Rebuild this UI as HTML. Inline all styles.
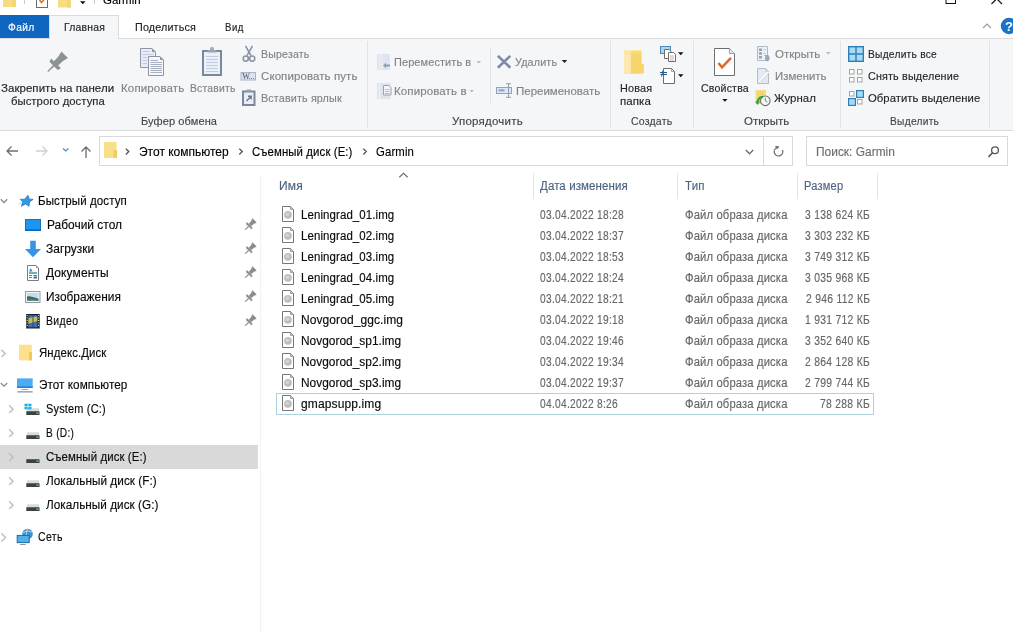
<!DOCTYPE html>
<html><head><meta charset="utf-8"><style>
html,body{margin:0;padding:0;width:1013px;height:633px;overflow:hidden;background:#fff;position:relative}
.t{position:absolute;white-space:nowrap;font-family:"Liberation Sans",sans-serif;font-size:12px;line-height:12px;transform-origin:0 0;-webkit-text-stroke:0.15px currentColor}
svg{overflow:visible}
#root{position:absolute;left:0;top:0;width:1013px;height:633px;will-change:transform}
</style></head><body><div id="root">
<div style="position:absolute;left:0px;top:38px;width:1013px;height:92px;background:#f5f6f7"></div>
<div style="position:absolute;left:0px;top:38px;width:1013px;height:1px;background:#dadbdc"></div>
<div style="position:absolute;left:0px;top:130px;width:1013px;height:1px;background:#dadbdc"></div>
<div style="position:absolute;left:0px;top:15px;width:49px;height:23px;background:#0f66c0"></div>
<div style="position:absolute;left:49px;top:15px;width:70px;height:24px;background:#f5f6f7;border:1px solid #dadbdc;border-bottom:none;box-sizing:border-box"></div>
<div class="t" style="left:7.70px;top:21.02px;color:#fff;font-size:11.5px;letter-spacing:0.365px;transform:scaleX(0.8922);">Файл</div>
<div class="t" style="left:63.70px;top:21.02px;color:#222;font-size:11.5px;letter-spacing:0.242px;transform:scaleX(0.9067);">Главная</div>
<div class="t" style="left:134.80px;top:21.02px;color:#222;font-size:11.5px;letter-spacing:0.155px;transform:scaleX(0.9369);">Поделиться</div>
<div class="t" style="left:225.40px;top:21.02px;color:#222;font-size:11.5px;letter-spacing:0.659px;transform:scaleX(0.8317);">Вид</div>
<div class="t" style="left:102.70px;top:-6.38px;color:#000;font-size:11.5px;letter-spacing:0.010px;transform:scaleX(0.9960);">Garmin</div>
<div style="position:absolute;left:24px;top:0px;width:1px;height:4px;background:#c8c8c8"></div>
<div style="position:absolute;left:94px;top:0px;width:1px;height:4px;background:#c8c8c8"></div>
<div class="t" style="left:1.40px;top:82.02px;color:#262626;font-size:11.5px;letter-spacing:0.042px;transform:scaleX(0.9999);">Закрепить на панели</div>
<div class="t" style="left:10.70px;top:95.02px;color:#262626;font-size:11.5px;letter-spacing:0.035px;transform:scaleX(0.9838);">быстрого доступа</div>
<div class="t" style="left:120.70px;top:82.02px;color:#838383;font-size:11.5px;letter-spacing:0.142px;transform:scaleX(0.9999);">Копировать</div>
<div class="t" style="left:189.60px;top:82.02px;color:#838383;font-size:11.5px;letter-spacing:0.252px;transform:scaleX(0.8987);">Вставить</div>
<div class="t" style="left:260.60px;top:48.02px;color:#838383;font-size:11.5px;letter-spacing:0.212px;transform:scaleX(0.9177);">Вырезать</div>
<div class="t" style="left:260.60px;top:70.02px;color:#838383;font-size:11.5px;letter-spacing:0.086px;transform:scaleX(0.9999);">Скопировать путь</div>
<div class="t" style="left:260.60px;top:92.02px;color:#838383;font-size:11.5px;letter-spacing:0.140px;transform:scaleX(0.9377);">Вставить ярлык</div>
<div class="t" style="left:141.30px;top:115.02px;color:#454545;font-size:11.5px;letter-spacing:0.100px;transform:scaleX(0.9590);">Буфер обмена</div>
<div class="t" style="left:394.40px;top:56.02px;color:#838383;font-size:11.5px;letter-spacing:0.109px;transform:scaleX(0.9522);">Переместить в</div>
<div class="t" style="left:394.40px;top:85.02px;color:#838383;font-size:11.5px;letter-spacing:0.116px;transform:scaleX(0.9999);">Копировать в</div>
<div class="t" style="left:514.80px;top:56.02px;color:#838383;font-size:11.5px;letter-spacing:0.164px;transform:scaleX(0.9357);">Удалить</div>
<div class="t" style="left:515.60px;top:85.02px;color:#838383;font-size:11.5px;transform:scaleX(0.9981);">Переименовать</div>
<div class="t" style="left:452.00px;top:115.02px;color:#454545;font-size:11.5px;letter-spacing:0.227px;transform:scaleX(0.9999);">Упорядочить</div>
<div class="t" style="left:619.60px;top:82.02px;color:#262626;font-size:11.5px;letter-spacing:0.168px;transform:scaleX(0.9419);">Новая</div>
<div class="t" style="left:619.60px;top:95.02px;color:#262626;font-size:11.5px;letter-spacing:0.092px;transform:scaleX(0.9999);">папка</div>
<div class="t" style="left:630.60px;top:115.02px;color:#454545;font-size:11.5px;letter-spacing:0.218px;transform:scaleX(0.9154);">Создать</div>
<div class="t" style="left:701.00px;top:82.02px;color:#262626;font-size:11.5px;letter-spacing:0.209px;transform:scaleX(0.9179);">Свойства</div>
<div class="t" style="left:774.50px;top:48.02px;color:#838383;font-size:11.5px;letter-spacing:0.022px;transform:scaleX(0.9999);">Открыть</div>
<div class="t" style="left:774.50px;top:70.02px;color:#838383;font-size:11.5px;letter-spacing:0.027px;transform:scaleX(0.9892);">Изменить</div>
<div class="t" style="left:774.00px;top:92.02px;color:#262626;font-size:11.5px;letter-spacing:0.017px;transform:scaleX(0.9941);">Журнал</div>
<div class="t" style="left:743.70px;top:115.02px;color:#454545;font-size:11.5px;letter-spacing:0.022px;transform:scaleX(0.9999);">Открыть</div>
<div class="t" style="left:867.60px;top:48.02px;color:#262626;font-size:11.5px;letter-spacing:0.269px;transform:scaleX(0.8897);">Выделить все</div>
<div class="t" style="left:867.60px;top:70.02px;color:#262626;font-size:11.5px;letter-spacing:0.140px;transform:scaleX(0.9402);">Снять выделение</div>
<div class="t" style="left:867.60px;top:92.02px;color:#262626;font-size:11.5px;letter-spacing:0.041px;transform:scaleX(0.9817);">Обратить выделение</div>
<div class="t" style="left:889.80px;top:115.02px;color:#454545;font-size:11.5px;letter-spacing:0.315px;transform:scaleX(0.8849);">Выделить</div>
<div style="position:absolute;left:367px;top:41px;width:1px;height:87px;background:#e2e3e4"></div>
<div style="position:absolute;left:610px;top:41px;width:1px;height:87px;background:#e2e3e4"></div>
<div style="position:absolute;left:693px;top:41px;width:1px;height:87px;background:#e2e3e4"></div>
<div style="position:absolute;left:840px;top:41px;width:1px;height:87px;background:#e2e3e4"></div>
<div style="position:absolute;left:989px;top:41px;width:1px;height:87px;background:#e2e3e4"></div>
<div style="position:absolute;left:490px;top:48px;width:1px;height:55px;background:#e2e3e4"></div>
<div style="position:absolute;left:99px;top:136px;width:694px;height:30px;border:1px solid #d9d9d9;box-sizing:border-box;background:#fff"></div>
<div style="position:absolute;left:763px;top:137px;width:1px;height:28px;background:#d9d9d9"></div>
<div style="position:absolute;left:806px;top:136px;width:202px;height:30px;border:1px solid #d9d9d9;box-sizing:border-box;background:#fff"></div>
<div class="t" style="left:138.90px;top:145.84px;color:#000;font-size:12.0px;transform:scaleX(0.9995);">Этот компьютер</div>
<div class="t" style="left:252.30px;top:145.84px;color:#000;font-size:12.0px;letter-spacing:0.116px;transform:scaleX(0.9485);">Съемный диск (E:)</div>
<div class="t" style="left:376.40px;top:145.84px;color:#000;font-size:12.0px;letter-spacing:0.148px;transform:scaleX(0.9456);">Garmin</div>
<div class="t" style="left:815.50px;top:145.84px;color:#6d6d6d;font-size:12.0px;letter-spacing:0.015px;transform:scaleX(0.9932);">Поиск: Garmin</div>
<div class="t" style="left:279.20px;top:179.84px;color:#4e6380;font-size:12.0px;letter-spacing:0.215px;transform:scaleX(0.9999);">Имя</div>
<div class="t" style="left:540.00px;top:179.84px;color:#4e6380;font-size:12.0px;letter-spacing:0.097px;transform:scaleX(0.9592);">Дата изменения</div>
<div class="t" style="left:684.60px;top:179.84px;color:#4e6380;font-size:12.0px;letter-spacing:0.153px;transform:scaleX(0.9553);">Тип</div>
<div class="t" style="left:804.30px;top:179.84px;color:#4e6380;font-size:12.0px;letter-spacing:0.223px;transform:scaleX(0.9232);">Размер</div>
<div style="position:absolute;left:533px;top:173px;width:1px;height:26px;background:#e5e5e5"></div>
<div style="position:absolute;left:677px;top:173px;width:1px;height:26px;background:#e5e5e5"></div>
<div style="position:absolute;left:797px;top:173px;width:1px;height:26px;background:#e5e5e5"></div>
<div style="position:absolute;left:877px;top:173px;width:1px;height:26px;background:#e5e5e5"></div>
<div style="position:absolute;left:260px;top:176px;width:1px;height:457px;background:#f2f2f2"></div>
<div style="position:absolute;left:0px;top:445px;width:258px;height:24px;background:#d9d9d9"></div>
<div class="t" style="left:38.40px;top:194.84px;color:#0a0a0a;font-size:12.0px;letter-spacing:0.092px;transform:scaleX(0.9617);">Быстрый доступ</div>
<div class="t" style="left:46.60px;top:218.84px;color:#0a0a0a;font-size:12.0px;letter-spacing:0.015px;transform:scaleX(0.9934);">Рабочий стол</div>
<div class="t" style="left:46.10px;top:242.84px;color:#0a0a0a;font-size:12.0px;letter-spacing:0.006px;transform:scaleX(0.9972);">Загрузки</div>
<div class="t" style="left:46.10px;top:266.84px;color:#0a0a0a;font-size:12.0px;letter-spacing:0.093px;transform:scaleX(0.9999);">Документы</div>
<div class="t" style="left:46.40px;top:290.84px;color:#0a0a0a;font-size:12.0px;letter-spacing:0.026px;transform:scaleX(0.9897);">Изображения</div>
<div class="t" style="left:46.40px;top:314.84px;color:#0a0a0a;font-size:12.0px;letter-spacing:0.410px;transform:scaleX(0.8720);">Видео</div>
<div class="t" style="left:38.50px;top:346.84px;color:#0a0a0a;font-size:12.0px;letter-spacing:0.125px;transform:scaleX(0.9483);">Яндекс.Диск</div>
<div class="t" style="left:38.50px;top:378.84px;color:#0a0a0a;font-size:12.0px;letter-spacing:0.056px;transform:scaleX(0.9762);">Этот компьютер</div>
<div class="t" style="left:46.20px;top:402.84px;color:#0a0a0a;font-size:12.0px;letter-spacing:0.195px;transform:scaleX(0.9130);">System (C:)</div>
<div class="t" style="left:46.20px;top:426.84px;color:#0a0a0a;font-size:12.0px;letter-spacing:0.362px;transform:scaleX(0.8449);">B (D:)</div>
<div class="t" style="left:46.20px;top:450.84px;color:#0a0a0a;font-size:12.0px;letter-spacing:0.112px;transform:scaleX(0.9499);">Съемный диск (E:)</div>
<div class="t" style="left:46.20px;top:474.84px;color:#0a0a0a;font-size:12.0px;letter-spacing:0.043px;transform:scaleX(0.9796);">Локальный диск (F:)</div>
<div class="t" style="left:46.20px;top:498.84px;color:#0a0a0a;font-size:12.0px;letter-spacing:0.051px;transform:scaleX(0.9761);">Локальный диск (G:)</div>
<div class="t" style="left:38.40px;top:530.84px;color:#0a0a0a;font-size:12.0px;letter-spacing:0.408px;transform:scaleX(0.8741);">Сеть</div>
<div style="position:absolute;left:276px;top:393px;width:598px;height:22px;border:1px solid #b0d2df;box-sizing:border-box"></div>
<div class="t" style="left:300.50px;top:208.84px;color:#0a0a0a;font-size:12.0px;letter-spacing:0.098px;transform:scaleX(0.9555);">Leningrad_01.img</div>
<div class="t" style="left:540.30px;top:208.84px;color:#666666;font-size:12.0px;letter-spacing:0.352px;transform:scaleX(0.8481);">03.04.2022 18:28</div>
<div class="t" style="left:685.00px;top:208.84px;color:#666666;font-size:12.0px;letter-spacing:0.149px;transform:scaleX(0.9361);">Файл образа диска</div>
<div class="t" style="left:805.12px;top:208.84px;color:#666666;font-size:12.0px;letter-spacing:0.333px;transform:scaleX(0.8609);">3 138 624 КБ</div>
<div class="t" style="left:300.50px;top:229.84px;color:#0a0a0a;font-size:12.0px;letter-spacing:0.098px;transform:scaleX(0.9555);">Leningrad_02.img</div>
<div class="t" style="left:540.30px;top:229.84px;color:#666666;font-size:12.0px;letter-spacing:0.352px;transform:scaleX(0.8481);">03.04.2022 18:37</div>
<div class="t" style="left:685.00px;top:229.84px;color:#666666;font-size:12.0px;letter-spacing:0.149px;transform:scaleX(0.9361);">Файл образа диска</div>
<div class="t" style="left:805.12px;top:229.84px;color:#666666;font-size:12.0px;letter-spacing:0.333px;transform:scaleX(0.8609);">3 303 232 КБ</div>
<div class="t" style="left:300.50px;top:250.84px;color:#0a0a0a;font-size:12.0px;letter-spacing:0.098px;transform:scaleX(0.9555);">Leningrad_03.img</div>
<div class="t" style="left:540.30px;top:250.84px;color:#666666;font-size:12.0px;letter-spacing:0.352px;transform:scaleX(0.8481);">03.04.2022 18:53</div>
<div class="t" style="left:685.00px;top:250.84px;color:#666666;font-size:12.0px;letter-spacing:0.149px;transform:scaleX(0.9361);">Файл образа диска</div>
<div class="t" style="left:805.12px;top:250.84px;color:#666666;font-size:12.0px;letter-spacing:0.333px;transform:scaleX(0.8609);">3 749 312 КБ</div>
<div class="t" style="left:300.50px;top:271.84px;color:#0a0a0a;font-size:12.0px;letter-spacing:0.098px;transform:scaleX(0.9555);">Leningrad_04.img</div>
<div class="t" style="left:540.30px;top:271.84px;color:#666666;font-size:12.0px;letter-spacing:0.352px;transform:scaleX(0.8481);">03.04.2022 18:24</div>
<div class="t" style="left:685.00px;top:271.84px;color:#666666;font-size:12.0px;letter-spacing:0.149px;transform:scaleX(0.9361);">Файл образа диска</div>
<div class="t" style="left:805.12px;top:271.84px;color:#666666;font-size:12.0px;letter-spacing:0.333px;transform:scaleX(0.8609);">3 035 968 КБ</div>
<div class="t" style="left:300.50px;top:292.84px;color:#0a0a0a;font-size:12.0px;letter-spacing:0.098px;transform:scaleX(0.9555);">Leningrad_05.img</div>
<div class="t" style="left:540.30px;top:292.84px;color:#666666;font-size:12.0px;letter-spacing:0.352px;transform:scaleX(0.8481);">03.04.2022 18:21</div>
<div class="t" style="left:685.00px;top:292.84px;color:#666666;font-size:12.0px;letter-spacing:0.149px;transform:scaleX(0.9361);">Файл образа диска</div>
<div class="t" style="left:805.93px;top:292.84px;color:#666666;font-size:12.0px;letter-spacing:0.329px;transform:scaleX(0.8609);">2 946 112 КБ</div>
<div class="t" style="left:300.50px;top:313.84px;color:#0a0a0a;font-size:12.0px;letter-spacing:0.079px;transform:scaleX(0.9999);">Novgorod_ggc.img</div>
<div class="t" style="left:540.30px;top:313.84px;color:#666666;font-size:12.0px;letter-spacing:0.352px;transform:scaleX(0.8481);">03.04.2022 19:18</div>
<div class="t" style="left:685.00px;top:313.84px;color:#666666;font-size:12.0px;letter-spacing:0.149px;transform:scaleX(0.9361);">Файл образа диска</div>
<div class="t" style="left:805.12px;top:313.84px;color:#666666;font-size:12.0px;letter-spacing:0.333px;transform:scaleX(0.8609);">1 931 712 КБ</div>
<div class="t" style="left:300.50px;top:334.84px;color:#0a0a0a;font-size:12.0px;letter-spacing:0.021px;transform:scaleX(0.9908);">Novgorod_sp1.img</div>
<div class="t" style="left:540.30px;top:334.84px;color:#666666;font-size:12.0px;letter-spacing:0.352px;transform:scaleX(0.8481);">03.04.2022 19:46</div>
<div class="t" style="left:685.00px;top:334.84px;color:#666666;font-size:12.0px;letter-spacing:0.149px;transform:scaleX(0.9361);">Файл образа диска</div>
<div class="t" style="left:805.12px;top:334.84px;color:#666666;font-size:12.0px;letter-spacing:0.333px;transform:scaleX(0.8609);">3 352 640 КБ</div>
<div class="t" style="left:300.50px;top:355.84px;color:#0a0a0a;font-size:12.0px;letter-spacing:0.021px;transform:scaleX(0.9908);">Novgorod_sp2.img</div>
<div class="t" style="left:540.30px;top:355.84px;color:#666666;font-size:12.0px;letter-spacing:0.352px;transform:scaleX(0.8481);">03.04.2022 19:34</div>
<div class="t" style="left:685.00px;top:355.84px;color:#666666;font-size:12.0px;letter-spacing:0.149px;transform:scaleX(0.9361);">Файл образа диска</div>
<div class="t" style="left:805.12px;top:355.84px;color:#666666;font-size:12.0px;letter-spacing:0.333px;transform:scaleX(0.8609);">2 864 128 КБ</div>
<div class="t" style="left:300.50px;top:376.84px;color:#0a0a0a;font-size:12.0px;letter-spacing:0.021px;transform:scaleX(0.9908);">Novgorod_sp3.img</div>
<div class="t" style="left:540.30px;top:376.84px;color:#666666;font-size:12.0px;letter-spacing:0.352px;transform:scaleX(0.8481);">03.04.2022 19:37</div>
<div class="t" style="left:685.00px;top:376.84px;color:#666666;font-size:12.0px;letter-spacing:0.149px;transform:scaleX(0.9361);">Файл образа диска</div>
<div class="t" style="left:805.12px;top:376.84px;color:#666666;font-size:12.0px;letter-spacing:0.333px;transform:scaleX(0.8609);">2 799 744 КБ</div>
<div class="t" style="left:300.50px;top:397.84px;color:#0a0a0a;font-size:12.0px;letter-spacing:0.126px;transform:scaleX(0.9999);">gmapsupp.img</div>
<div class="t" style="left:540.30px;top:397.84px;color:#666666;font-size:12.0px;letter-spacing:0.350px;transform:scaleX(0.8481);">04.04.2022 8:26</div>
<div class="t" style="left:685.00px;top:397.84px;color:#666666;font-size:12.0px;letter-spacing:0.149px;transform:scaleX(0.9361);">Файл образа диска</div>
<div class="t" style="left:820.22px;top:397.84px;color:#666666;font-size:12.0px;letter-spacing:0.351px;transform:scaleX(0.8609);">78 288 КБ</div>
<svg style="position:absolute;left:0;top:0" width="1013" height="633" viewBox="0 0 1013 633">
<!-- title bar icons -->
<rect x="3" y="-2" width="13" height="9" fill="#f8dc84"/><rect x="12" y="-2" width="4" height="9" fill="#f2d678"/>
<rect x="36.5" y="-2" width="11" height="9.5" fill="#fff" stroke="#6b6b6b" stroke-width="1"/>
<path d="M39.5 0 L41.5 2.5 L45 -1.5" stroke="#d8703a" stroke-width="1.6" fill="none"/>
<rect x="58" y="-2" width="13" height="9.5" fill="#f8dc84"/><rect x="67" y="-2" width="4" height="9.5" fill="#f2d678"/>
<path d="M80 1.3 L85.5 1.3 L82.75 4.2 Z" fill="#111"/>
<!-- window buttons -->
<rect x="946" y="-4" width="9.5" height="7.5" fill="none" stroke="#111" stroke-width="1"/>
<path d="M991.5 4 L1002.5 -7 M1002 4 L991 -7" stroke="#111" stroke-width="1.1" fill="none"/>
<!-- collapse chevron and help -->
<path d="M983 28 L987 24 L991 28" stroke="#9a9a9a" stroke-width="1.1" fill="none"/>
<circle cx="1009" cy="26" r="8.2" fill="#1a73c9"/>
<text x="1009" y="31" font-family="Liberation Sans" font-weight="bold" font-size="13" fill="#fff" text-anchor="middle">?</text>

<!-- pin big -->
<g transform="translate(54.8,64.6) rotate(45)" fill="#8c9397">
 <path d="M-7 -1.8 L7 -1.8 L5.8 1.8 L-5.8 1.8 Z"/>
 <path d="M-3 -1 L-3.2 -8 L-4.6 -14 L4.6 -14 L3.2 -8 L3 -1 Z"/>
 <path d="M-0.9 1.5 L0.9 1.5 L0.6 10 L-0.6 10 Z"/>
</g>
<!-- copy big -->
<path d="M140.5 48.5 H152 L155.5 52 V67.5 H140.5 Z" fill="#e9ecf7" stroke="#8d95a8" stroke-width="1"/>
<path d="M152 48.5 V52 H155.5 Z" fill="#8d95a8"/>
<path d="M142.5 51.5 H150 M142.5 54.5 H153 M142.5 57.5 H147 M142.5 60.5 H147 M142.5 63.5 H147" stroke="#c3c9d8" stroke-width="1"/>
<path d="M148.5 56.5 H160 L163.5 60 V75.5 H148.5 Z" fill="#f5f7fb" stroke="#8d95a8" stroke-width="1"/>
<path d="M160 56.5 V60 H163.5 Z" fill="#8d95a8"/>
<path d="M150.5 60.5 H158 M150.5 62.5 H162 M150.5 64.5 H162 M150.5 66.5 H162 M150.5 68.5 H162 M150.5 70.5 H162 M150.5 72.5 H162" stroke="#9ea7ba" stroke-width="0.9"/>
<!-- paste big -->
<rect x="203" y="51" width="18" height="24" fill="#e8f0fb" stroke="#7c8799" stroke-width="2"/>
<rect x="207.5" y="50" width="9" height="2.5" fill="#9aa3b1"/>
<rect x="210" y="47" width="4" height="3.5" rx="1.5" fill="#a3abb8"/>
<g stroke="#c3cddd" stroke-width="1"><path d="M206 56.5 H218 M206 59.5 H218 M206 62.5 H218 M206 65.5 H218 M206 68.5 H218 M206 71.5 H218"/></g>
<!-- scissors -->
<g stroke="#8a95a8" fill="none">
 <path d="M245.5 46 L251 55.5 M252.5 46 L247 55.5" stroke-width="1.5"/>
 <circle cx="245.8" cy="58.6" r="2.6" stroke-width="1.6"/>
 <circle cx="252.2" cy="58.6" r="2.6" stroke-width="1.6"/>
</g>
<!-- copy path -->
<rect x="241" y="72.5" width="14.5" height="7.5" fill="#dde4f1" stroke="#aab3c6" stroke-width="1"/>
<text x="242" y="79" font-family="Liberation Serif" font-size="8" font-weight="bold" fill="#6d7890">W</text>
<path d="M249 78.5 H254" stroke="#7c869a" stroke-width="1" stroke-dasharray="1 1"/>
<!-- paste shortcut -->
<rect x="243" y="91.5" width="11.5" height="13.5" fill="#e8eff9" stroke="#7d8797" stroke-width="2"/>
<rect x="246.5" y="89.5" width="4.5" height="2" fill="#9aa3b1"/>
<path d="M246.5 101 L251 96.5 M248 96.3 H251.2 V99.5" stroke="#6e7684" stroke-width="1.4" fill="none"/>

<!-- move to -->
<rect x="377" y="54" width="13" height="16" fill="#dfe5ef"/>
<path d="M379.5 54 V70 M382 54 V70" stroke="#eef1f7" stroke-width="1"/>
<path d="M383 65.5 L386 62.8 V64.5 H390 V66.5 H386 V68.2 Z" fill="#8e9bb6"/>
<!-- copy to -->
<rect x="377" y="83" width="13.5" height="16" fill="#dfe5ef"/>
<path d="M379.5 83 V99" stroke="#eef1f7" stroke-width="1"/>
<path d="M383.5 85.5 H389 L391 87.5 V95 H383.5 Z" fill="#f2f5fa" stroke="#97a2b6" stroke-width="1"/>
<path d="M385 89.5 H389.5 M385 91.5 H389.5 M385 93.5 H389.5" stroke="#a8b2c4" stroke-width="0.8"/>
<!-- delete X -->
<path d="M498.8 56.8 L509.3 66.8 M509.3 56.8 L498.8 66.8" stroke="#7d8ba6" stroke-width="2.6" stroke-linecap="square"/>
<!-- rename -->
<rect x="496.5" y="87.5" width="15" height="6" fill="#dce6f5" stroke="#93a2bb" stroke-width="1"/>
<rect x="498.5" y="89.3" width="6" height="2" fill="#93a2bb"/>
<path d="M508.5 83.5 V97.5 M506 83.8 H511 M506 97.3 H511" stroke="#8f9bb0" stroke-width="1"/>

<!-- new folder -->
<path d="M624 50 H641.5 V74 H624 Z" fill="#fce6a0"/>
<path d="M630.8 51.5 H641.5 V64 H643.8 V73.5 H630.8 Z" fill="#f7d46c"/>
<path d="M624 50 H630.8 V74 L624 72.5 Z" fill="#fde9b0"/>
<path d="M625 52 H641 M625 53.5 H641" stroke="#f3dc95" stroke-width="0.6"/>
<!-- new item -->
<rect x="660.5" y="46.5" width="10" height="7" fill="#a9d4f1" stroke="#4e88b6" stroke-width="1"/>
<path d="M664.5 49.5 H669 L671 51.5 V58.5 H664.5 Z" fill="#fff" stroke="#6d6d6d" stroke-width="1"/>
<path d="M668.5 52.5 H673.5 L675.5 54.5 V61.5 H668.5 Z" fill="#fff" stroke="#6d6d6d" stroke-width="1"/>
<path d="M670 56 H674 M670 58 H674 M670 60 H674" stroke="#d29aa5" stroke-width="0.8"/>
<path d="M678 52.3 H683.5 L680.75 55.2 Z" fill="#111"/>
<!-- easy access -->
<path d="M663.5 68.5 H671.5 L674.5 71.5 V83.5 H663.5 Z" fill="#fff" stroke="#6d6d6d" stroke-width="1"/>
<path d="M671.5 68.5 V71.5 H674.5" fill="none" stroke="#8d8d8d" stroke-width="0.8"/>
<path d="M660 72.5 H667 M660.5 74.5 H667 M663 70.5 L661.5 76.5" stroke="#2a5c86" stroke-width="1"/>
<path d="M678 74.3 H683.5 L680.75 77.2 Z" fill="#111"/>

<!-- properties -->
<path d="M714.5 48.5 H729.5 L734.5 53.5 V75.5 H714.5 Z" fill="#fff" stroke="#6e6e6e" stroke-width="1"/>
<path d="M729.5 48.5 V53.5 H734.5" fill="#e8e8e8" stroke="#8e8e8e" stroke-width="0.8"/>
<path d="M718.5 63 L722 67.3 L731 57.8" stroke="#e0672d" stroke-width="2.6" fill="none"/>
<path d="M722.3 99 H727.5 L724.9 101.8 Z" fill="#111"/>
<!-- open -->
<path d="M757.5 46.5 H767.5 V60.5 H757.5 Z" fill="#eef1f6" stroke="#b1b9c8" stroke-width="1"/>
<path d="M759 48.5 h3 v2.6 h-3z M759 52.2 h3 v2.6 h-3z M759 55.9 h3 v2.6 h-3z" fill="#98a3b6"/>
<path d="M763 49.8 H766 M763 53.5 H766" stroke="#c3cad6" stroke-width="1"/>
<ellipse cx="767.3" cy="58.3" rx="2.2" ry="3" fill="#9aa5b8"/>
<path d="M764.5 55.5 L768.5 55.5" stroke="#9aa5b8" stroke-width="1"/>
<!-- edit -->
<path d="M757.5 68.5 H765.5 L768.5 71.5 V83.5 H757.5 Z" fill="#e4eaf4" stroke="#b3bccc" stroke-width="1"/>
<path d="M765.5 68.5 V71.5 H768.5" fill="none" stroke="#c2c9d6" stroke-width="0.8"/>
<path d="M759.5 81.5 L768.5 72" stroke="#ffffff" stroke-width="1.6"/>
<path d="M760.5 82 L769 73" stroke="#b8c1d0" stroke-width="0.8"/>
<!-- history -->
<rect x="755.5" y="90" width="10.5" height="14" fill="#f5dd7c"/>
<path d="M757 92.5 H764 M757 94.5 H764" stroke="#e9cd63" stroke-width="0.8"/>
<circle cx="765.3" cy="100.8" r="4.8" fill="#f6f6f6" stroke="#707070" stroke-width="1.1"/>
<path d="M765.3 97.8 V100.8 L767.3 102.3" stroke="#707070" stroke-width="0.9" fill="none"/>
<path d="M757.5 103 Q757.8 97.2 763 96.8" stroke="#36a436" stroke-width="2.2" fill="none"/>
<path d="M755.2 101.5 L760 101.5 L757.5 105 Z" fill="#36a436"/>
<!-- select all -->
<rect x="848.7" y="46.7" width="14.6" height="14.6" fill="#a6dcf8" stroke="#2f7eb6" stroke-width="1.4"/>
<path d="M856 46.7 V61.3 M848.7 54 H863.3" stroke="#2f7eb6" stroke-width="1.4"/>
<!-- select none -->
<g fill="#fff" stroke="#a3a3a3" stroke-width="1">
<rect x="849.5" y="69.5" width="4.5" height="4.5"/><rect x="857.5" y="69.5" width="4.5" height="4.5"/>
<rect x="849.5" y="77.5" width="4.5" height="4.5"/><rect x="857.5" y="77.5" width="4.5" height="4.5"/>
<rect x="849.5" y="91.5" width="4.5" height="4.5"/><rect x="857.5" y="99.5" width="4.5" height="4.5"/>
</g>
<g fill="#a6dcf8" stroke="#2f7eb6" stroke-width="1.2">
<rect x="856.6" y="90.6" width="6.8" height="6.8"/><rect x="848.6" y="98.6" width="6.8" height="6.8"/>
</g>

<!-- nav arrows -->
<path d="M18 151 H7 M11.5 146.5 L7 151 L11.5 155.5" stroke="#6d6d6d" stroke-width="1.3" fill="none"/>
<path d="M36 151 H47 M42.5 146.5 L47 151 L42.5 155.5" stroke="#cfcfcf" stroke-width="1.3" fill="none"/>
<path d="M63 148.5 L65.7 151 L68.4 148.5" stroke="#4b86d6" stroke-width="1.2" fill="none"/>
<path d="M86 158 V147 M81.5 151.5 L86 147 L90.5 151.5" stroke="#6d6d6d" stroke-width="1.3" fill="none"/>
<!-- address folder -->
<path d="M104 142 H116.5 V158 H104 Z" fill="#f9df88"/>
<path d="M113.5 150 H117 V158 H113.5 Z" fill="#f2cb5b"/>
<path d="M125.8 148.8 L128.8 151.6 L125.8 154.4 M239.3 148.8 L242.3 151.6 L239.3 154.4 M363.3 148.8 L366.3 151.6 L363.3 154.4" stroke="#555" stroke-width="1.3" fill="none"/>
<path d="M745.8 150 L749.5 153.8 L753.2 150" stroke="#6d6d6d" stroke-width="1.4" fill="none"/>
<!-- refresh -->
<path d="M782.5 150 A4.3 4.3 0 1 1 776.5 147.8" stroke="#6d6d6d" stroke-width="1.3" fill="none"/>
<path d="M775 146 L779.5 146.2 L777 149.6 Z" fill="#6d6d6d"/>
<!-- search -->
<circle cx="995" cy="150.3" r="3.4" stroke="#555" stroke-width="1.3" fill="none"/>
<path d="M992.6 152.8 L988.5 156.9" stroke="#555" stroke-width="1.6"/>
<!-- sort caret -->
<path d="M399.3 177.3 L403.5 173.3 L407.7 177.3" stroke="#707070" stroke-width="1.2" fill="none"/>

<!-- nav pane -->
<path d="M0.8 199.3 L4 202.5 L7.2 199.3" stroke="#8a8a8a" stroke-width="1.3" fill="none"/>
<polygon points="28.0,195.3 29.3,199.2 33.2,199.3 29.6,202.1 28.9,206.3 25.7,203.9 21.3,206.3 22.8,202.1 20.2,199.3 24.6,199.2" fill="#2d9ae8" stroke="#2170b4" stroke-width="0.7" stroke-linejoin="round"/>
<path d="M18.5 204 L21 203.3" stroke="#9ccbef" stroke-width="0.8"/>
<rect x="25.5" y="219.5" width="15" height="11" fill="#1f95ef" stroke="#1372c4" stroke-width="1"/>
<rect x="25" y="229.3" width="16" height="1.7" fill="#0d68b8"/>
<path d="M30.2 240.7 H35.8 V249 H41 L33 257.2 L25 249 H30.2 Z" fill="#3693e8"/>
<path d="M27.5 265.5 H36 L38.5 268 V280.5 H27.5 Z" fill="#fff" stroke="#7c7c7c" stroke-width="1"/>
<path d="M36 265.5 V268 H38.5 Z" fill="#9a9a9a"/>
<path d="M29 271.5 L30.8 268 L32.5 271.5 Z" fill="#3d86c6"/>
<path d="M29 273 H37" stroke="#2f8fb8" stroke-width="1.4"/>
<path d="M29 275.5 H32 M33.5 275.5 H37 M29 277.5 H32" stroke="#4a7fa8" stroke-width="1.2"/>
<rect x="33.5" y="276.5" width="3.5" height="2" fill="#3f6f96"/>
<rect x="25.5" y="291.5" width="14.5" height="11" fill="#f4f6f8" stroke="#8e9aa5" stroke-width="1"/>
<rect x="27" y="293" width="11.5" height="8" fill="#c5dbe9"/>
<path d="M27 296.5 Q30 295.5 38.5 298.8 V301 H27 Z" fill="#3c6b5e"/>
<path d="M27 299.5 Q32 298.5 38.5 300.5 V301 H27 Z" fill="#5f8f7a"/>
<rect x="26.2" y="314" width="13.5" height="14.5" fill="#1b2433"/>
<rect x="28.4" y="315.3" width="9" height="12" fill="#3c6fb8"/>
<path d="M28.4 318.5 L33 317 L37.4 316.5 V321 L33 322.5 L28.4 323.5 Z" fill="#c9c04a"/>
<path d="M33 315.3 V327.3" stroke="#2a3a55" stroke-width="0.8"/>
<path d="M27.3 315 v1 M27.3 317.5 v1 M27.3 320 v1 M27.3 322.5 v1 M27.3 325 v1 M38.6 315 v1 M38.6 317.5 v1 M38.6 320 v1 M38.6 322.5 v1 M38.6 325 v1" stroke="#d8d8c8" stroke-width="1"/>
<!-- pins -->
<g id="pin" fill="#8c8c8c">
<g transform="translate(249.2,225.8) rotate(45)">
 <path d="M-4.3 -1 L4.3 -1 L3.6 1 L-3.6 1 Z"/>
 <path d="M-1.8 -1 L-1.9 -4 L-3 -7.6 L3 -7.6 L1.9 -4 L1.8 -1 Z"/>
 <path d="M-0.6 1 L0.6 1 L0.4 5.8 L-0.4 5.8 Z"/>
</g>
</g>
<use href="#pin" y="24"/><use href="#pin" y="48"/><use href="#pin" y="72"/><use href="#pin" y="96"/>
<!-- yandex folder -->
<path d="M1.5 349.7 L5.2 353.4 L1.5 357.1" stroke="#bdbdbd" stroke-width="1.4" fill="none"/>
<rect x="19" y="344.7" width="12.8" height="15.7" fill="#fbe08d"/>
<path d="M29 352 H32 V360.4 H29 Z" fill="#f3c65a"/>
<!-- this pc -->
<path d="M0.8 383 L4 386.2 L7.2 383" stroke="#8a8a8a" stroke-width="1.3" fill="none"/>
<rect x="17" y="378.4" width="15.7" height="9.5" fill="#4aacf4"/>
<rect x="17" y="386.6" width="15.7" height="1.3" fill="#1b77c9"/>
<rect x="21.3" y="389" width="7" height="1" fill="#9aa5ad"/>
<rect x="17.5" y="391.2" width="15.2" height="1.3" fill="#8a96a0"/>
<!-- drives -->
<g id="chev"><path d="M9.2 405.3 L13 409.2 L9.2 413.1" stroke="#bdbdbd" stroke-width="1.4" fill="none"/></g>
<use href="#chev" y="24"/><use href="#chev" y="48"/><use href="#chev" y="72"/><use href="#chev" y="96"/>
<g id="drv">
<rect x="27" y="408.3" width="12" height="2.8" fill="#d7dbde"/>
<rect x="26.3" y="411.2" width="13.2" height="3.8" fill="#3a4246"/>
<rect x="36.5" y="412.5" width="2" height="1.2" fill="#8fd18f"/>
</g>
<rect x="24.5" y="403.7" width="3.2" height="2.6" fill="#1fb3e0"/><rect x="28.3" y="403.7" width="3.2" height="2.6" fill="#1fb3e0"/>
<rect x="24.5" y="406.8" width="3.2" height="2.6" fill="#1fb3e0"/><rect x="28.3" y="406.8" width="3.2" height="2.6" fill="#1fb3e0"/>
<use href="#drv" y="24"/><use href="#drv" y="48"/><use href="#drv" y="72"/><use href="#drv" y="96"/>
<!-- network -->
<path d="M1.4 533.4 L5.5 537.5 L1.4 541.6" stroke="#c4c4c4" stroke-width="1.5" fill="none"/>
<circle cx="27.5" cy="534" r="5.3" fill="#3f93c9"/>
<path d="M23 532.5 Q27.5 529.5 32 532 M27.5 528.8 Q25 534 27.5 539" stroke="#cfe6f5" stroke-width="0.8" fill="none"/>
<rect x="17.2" y="535.4" width="12" height="7.2" fill="#4fb1ee" stroke="#1c6aa6" stroke-width="1"/>
<rect x="20" y="544" width="5.8" height="1" fill="#8c98a2"/>

<!-- file icons -->
<g id="fi">
<path d="M282.5 206.5 H290.5 L293.5 209.5 V221.5 H282.5 Z" fill="#fff" stroke="#767676" stroke-width="1"/>
<path d="M290.5 206.5 V209.5 H293.5 Z" fill="#cdbfc3" stroke="#9a8e90" stroke-width="0.8"/>
<circle cx="287.9" cy="214.8" r="3.9" fill="#bdbdbd"/>
<circle cx="287.4" cy="214.2" r="2" fill="#d2d2d2"/>
</g>
<use href="#fi" y="21"/><use href="#fi" y="42"/><use href="#fi" y="63"/><use href="#fi" y="84"/>
<use href="#fi" y="105"/><use href="#fi" y="126"/><use href="#fi" y="147"/><use href="#fi" y="168"/><use href="#fi" y="189"/>
<!-- ribbon disabled dropdown arrows -->
<path d="M476.5 61 H481 L478.75 63.5 Z" fill="#b8b8b8"/>
<path d="M469.5 90 H474 L471.75 92.5 Z" fill="#b8b8b8"/>
<path d="M561.7 60 H567.2 L564.45 63 Z" fill="#222"/>
<path d="M825.5 52 H831 L828.25 54.5 Z" fill="#c0c0c0"/>
</svg>

</div></body></html>
